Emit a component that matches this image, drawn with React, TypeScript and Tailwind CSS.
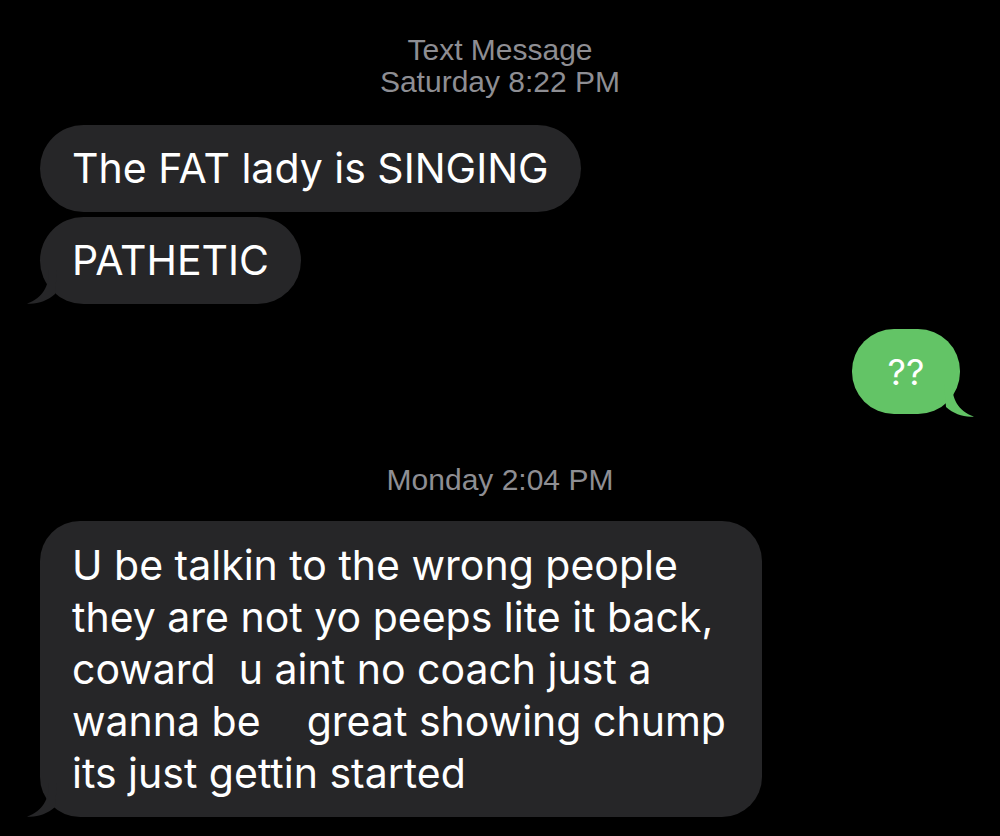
import * as React from 'react';

const GRAY = '#262628';

function LeftTail() {
  return (
    <svg
      className="absolute -left-[13px] bottom-0"
      width="30"
      height="34"
      viewBox="0 0 30 34"
      fill={GRAY}
    >
      <path d="M22 0 C22 16 16 28 0 33.5 C10 34.5 20 31 28 24 L30 0 Z" />
    </svg>
  );
}

function RightTail() {
  return (
    <svg
      className="absolute -right-[14px] -bottom-[3px]"
      width="30"
      height="34"
      viewBox="0 0 30 34"
      fill="#63c466"
    >
      <path d="M8 0 C8 16 14 28 30 33.5 C20 34.5 10 31 2 24 L0 0 Z" />
    </svg>
  );
}

function Stamp({ children }: { children: React.ReactNode }) {
  return (
    <div
      className="text-center text-[30px] leading-[32px] text-[#8e8e93]"
      style={{ fontFamily: '"Liberation Sans", Arial, sans-serif' }}
    >
      {children}
    </div>
  );
}

export default function App() {
  return (
    <div
      className="w-[1000px] h-[836px] overflow-hidden bg-black px-10 pt-[34px] flex flex-col"
      style={{ fontFamily: 'Inter, "Liberation Sans", sans-serif' }}
    >
      {/* Header */}
      <Stamp>Text Message</Stamp>
      <Stamp>Saturday 8:22 PM</Stamp>

      {/* Incoming group */}
      <div className="mt-[27px] flex flex-col items-start gap-[5px]">
        <div className="rounded-full bg-[#262628] px-8 py-[17px] text-[41px] leading-[53px] text-white">
          The FAT lady is SINGING
        </div>
        <div className="relative rounded-full bg-[#262628] px-8 py-[17px] text-[41px] leading-[53px] text-white">
          PATHETIC
          <LeftTail />
        </div>
      </div>

      {/* Outgoing */}
      <div className="mt-[25px] flex justify-end">
        <div className="relative flex h-[85px] w-[108px] items-center justify-center rounded-[42px] bg-[#63c466] text-[36px] text-white">
          ??
          <RightTail />
        </div>
      </div>

      <div className="mt-[50px]">
        <Stamp>Monday 2:04 PM</Stamp>
      </div>

      {/* Incoming long */}
      <div className="mt-[25px] flex">
        <div className="relative w-[722px] rounded-[40px] bg-[#262628] px-8 py-[18px] text-[41px] leading-[52px] text-white whitespace-pre">
          {'U be talkin to the wrong people\nthey are not yo peeps lite it back,\ncoward  u aint no coach just a\nwanna be    great showing chump\nits just gettin started'}
          <LeftTail />
        </div>
      </div>
    </div>
  );
}
